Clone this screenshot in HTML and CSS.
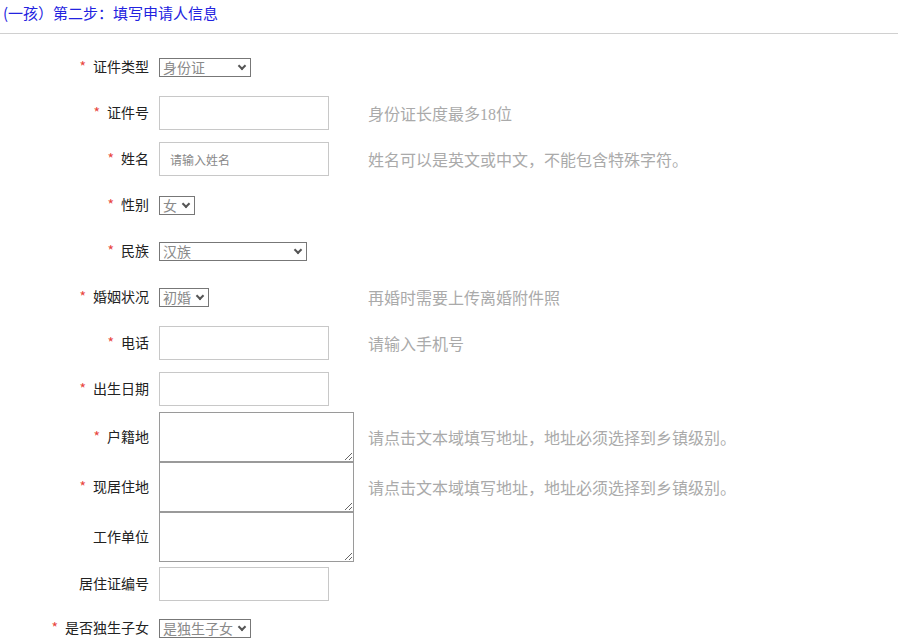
FILE: index.html
```html
<!DOCTYPE html>
<html>

<head>
	<title>填写申请人信息</title>
	<meta charset="UTF-8">
	<link rel="stylesheet" href="styles.css">
</head>

<body>
	<div class="step-title">(一孩）第二步：填写申请人信息</div>
	<form class="apply-form">
		<div class="row">
			<label class="label"><i>*</i>证件类型</label>
			<div class="field">
				<span class="sel sel-idtype">
					<select>
						<option>身份证</option>
					</select>
				</span>
			</div>
		</div>
		<div class="row">
			<label class="label"><i>*</i>证件号</label>
			<div class="field"><input type="text"></div>
			<span class="hint">身份证长度最多18位</span>
		</div>
		<div class="row">
			<label class="label"><i>*</i>姓名</label>
			<div class="field"><input type="text" placeholder="请输入姓名"></div>
			<span class="hint">姓名可以是英文或中文，不能包含特殊字符。</span>
		</div>
		<div class="row">
			<label class="label"><i>*</i>性别</label>
			<div class="field">
				<span class="sel sel-sex">
					<select>
						<option>女</option>
						<option>男</option>
					</select>
				</span>
			</div>
		</div>
		<div class="row">
			<label class="label"><i>*</i>民族</label>
			<div class="field">
				<span class="sel sel-nation">
					<select>
						<option>汉族</option>
					</select>
				</span>
			</div>
		</div>
		<div class="row">
			<label class="label"><i>*</i>婚姻状况</label>
			<div class="field">
				<span class="sel sel-marry">
					<select>
						<option>初婚</option>
						<option>再婚</option>
					</select>
				</span>
			</div>
			<span class="hint">再婚时需要上传离婚附件照</span>
		</div>
		<div class="row">
			<label class="label"><i>*</i>电话</label>
			<div class="field"><input type="text"></div>
			<span class="hint">请输入手机号</span>
		</div>
		<div class="row">
			<label class="label"><i>*</i>出生日期</label>
			<div class="field"><input type="text"></div>
		</div>
		<div class="row">
			<label class="label"><i>*</i>户籍地</label>
			<div class="field"><textarea></textarea></div>
			<span class="hint">请点击文本域填写地址，地址必须选择到乡镇级别。</span>
		</div>
		<div class="row">
			<label class="label"><i>*</i>现居住地</label>
			<div class="field"><textarea></textarea></div>
			<span class="hint">请点击文本域填写地址，地址必须选择到乡镇级别。</span>
		</div>
		<div class="row">
			<label class="label">工作单位</label>
			<div class="field"><textarea></textarea></div>
		</div>
		<div class="row row-tight">
			<label class="label">居住证编号</label>
			<div class="field"><input type="text"></div>
		</div>
		<div class="row row-tight">
			<label class="label"><i>*</i>是否独生子女</label>
			<div class="field">
				<span class="sel sel-only">
					<select>
						<option>是独生子女</option>
						<option>非独生子女</option>
					</select>
				</span>
			</div>
		</div>
	</form>
</body>

</html>
```

FILE: styles.css
```css
body {
	margin: 0;
	font-family: "Noto Sans CJK SC", "Liberation Sans", sans-serif;
	font-size: 14px;
	color: #222;
	background: #fff;
}

.step-title {
	height: 33px;
	line-height: 26px;
	padding-left: 3px;
	font-size: 15px;
	color: #2323e0;
	border-bottom: 1px solid #d0d0d0;
}

.apply-form {
	margin: 0;
	padding-top: 10px;
}

.row {
	display: flex;
	align-items: center;
	min-height: 46px;
}

.row-tight {
	min-height: 44px;
}

.label {
	width: 149px;
	text-align: right;
	margin-right: 10px;
	flex-shrink: 0;
	line-height: 18px;
	padding-bottom: 2px;
}

.label i {
	font-style: normal;
	color: #e8453c;
	margin-right: 7px;
}

.field {
	width: 209px;
	flex-shrink: 0;
	display: flex;
	align-items: center;
}

.field input {
	width: 170px;
	height: 34px;
	box-sizing: border-box;
	border: 1px solid #c8c8c8;
	padding: 0 10px;
	font-family: "Noto Sans CJK SC", sans-serif;
	font-size: 12px;
	outline: none;
}

.field input::placeholder {
	color: #888;
}

.field textarea {
	width: 195px;
	height: 50px;
	box-sizing: border-box;
	border: 1px solid #9a9a9a;
	margin: 0;
	display: block;
	font-size: 14px;
}

/* 下拉框：去掉原生样式，自己画箭头 */
.sel {
	position: relative;
	display: block;
	height: 19px;
}

.sel select {
	-webkit-appearance: none;
	appearance: none;
	display: block;
	width: 100%;
	height: 19px;
	box-sizing: border-box;
	border: 1px solid #777;
	border-radius: 0;
	padding: 0 14px 0 3px;
	margin: 0;
	line-height: 17px;
	font-family: "Noto Sans CJK SC", sans-serif;
	font-size: 14px;
	color: #8a8a8a;
	background: #fff;
	outline: none;
}

.sel::after {
	content: "";
	position: absolute;
	right: 6px;
	top: 5px;
	width: 4px;
	height: 4px;
	border-right: 2px solid #555;
	border-bottom: 2px solid #555;
	transform: rotate(45deg);
	pointer-events: none;
}

.sel-idtype {
	width: 92px;
}

.sel-sex {
	width: 36px;
}

.sel-nation {
	width: 148px;
}

.sel-marry {
	width: 50px;
}

.sel-only {
	width: 92px;
}

.hint {
	font-family: "Liberation Serif", "Noto Sans CJK SC", serif;
	font-size: 16px;
	color: #aaa;
}
```
